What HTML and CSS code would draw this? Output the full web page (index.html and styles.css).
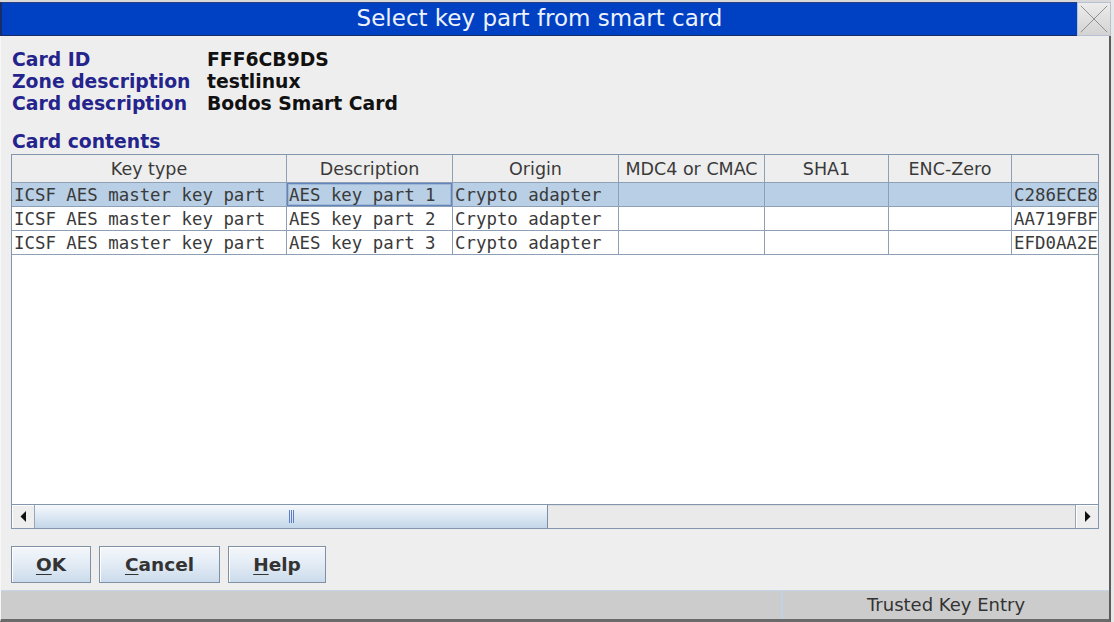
FILE: index.html
```html
<!DOCTYPE html>
<html>
<head>
<meta charset="utf-8">
<title>Select key part from smart card</title>
<link rel="stylesheet" href="styles.css">
</head>
<body>
<div class="desk">
  <div class="dialog">
    <div class="titlebar">
      <div class="title">Select key part from smart card</div>
      <div class="close">
        <svg width="34" height="34" viewBox="0 0 34 34"><path d="M3 3 L31 31 M31 3 L3 31" stroke="#8c8c8c" stroke-width="1" fill="none"/></svg>
      </div>
    </div>
    <div class="main">
      <div class="body">
        <div class="info">
          <div class="lbl">Card ID</div><div class="val">FFF6CB9DS</div>
          <div class="lbl">Zone description</div><div class="val">testlinux</div>
          <div class="lbl">Card description</div><div class="val">Bodos Smart Card</div>
        </div>
        <div class="section">Card contents</div>
        <div class="scrollpane">
          <div class="viewport">
            <div class="hrow">
              <div class="hcell c1">Key type</div>
              <div class="hcell c2">Description</div>
              <div class="hcell c3">Origin</div>
              <div class="hcell c4">MDC4 or CMAC</div>
              <div class="hcell c5">SHA1</div>
              <div class="hcell c6">ENC-Zero</div>
              <div class="hcell c7"></div>
            </div>
            <div class="row sel">
              <div class="cell c1">ICSF AES master key part</div>
              <div class="cell c2 focus">AES key part 1</div>
              <div class="cell c3">Crypto adapter</div>
              <div class="cell c4"></div>
              <div class="cell c5"></div>
              <div class="cell c6"></div>
              <div class="cell c7">C286ECE8</div>
            </div>
            <div class="row">
              <div class="cell c1">ICSF AES master key part</div>
              <div class="cell c2">AES key part 2</div>
              <div class="cell c3">Crypto adapter</div>
              <div class="cell c4"></div>
              <div class="cell c5"></div>
              <div class="cell c6"></div>
              <div class="cell c7">AA719FBF</div>
            </div>
            <div class="row">
              <div class="cell c1">ICSF AES master key part</div>
              <div class="cell c2">AES key part 3</div>
              <div class="cell c3">Crypto adapter</div>
              <div class="cell c4"></div>
              <div class="cell c5"></div>
              <div class="cell c6"></div>
              <div class="cell c7">EFD0AA2E</div>
            </div>
          </div>
          <div class="hscroll">
            <div class="arrow">
              <svg width="23" height="23" viewBox="0 0 23 23"><polygon points="14,6 14,17 8.5,11.5" fill="#111"/></svg>
            </div>
            <div class="thumb"><span class="grip"></span></div>
            <div class="track"></div>
            <div class="arrow right">
              <svg width="23" height="23" viewBox="0 0 23 23"><polygon points="9,6 9,17 14.5,11.5" fill="#111"/></svg>
            </div>
          </div>
        </div>
        <div class="buttons">
          <button class="btn ok"><u>O</u>K</button>
          <button class="btn cancel"><u>C</u>ancel</button>
          <button class="btn help"><u>H</u>elp</button>
        </div>
      </div>
      <div class="status">
        <div class="seg1"></div>
        <div class="seg2">Trusted Key Entry</div>
      </div>
    </div>
  </div>
</div>
</body>
</html>
```
FILE: styles.css
```css
html, body {
  margin: 0;
  padding: 0;
}
body {
  width: 1114px;
  height: 622px;
  overflow: hidden;
  background: #e4e4e4;
  font-family: "DejaVu Sans", sans-serif;
}
.desk {
  display: flex;
  width: 1114px;
  height: 622px;
  background: #e8e8e8;
}
.dialog {
  width: 1111px;
  height: 622px;
  display: flex;
  flex-direction: column;
  box-sizing: border-box;
  border-top: 2px solid #d9d9d9;
}
.titlebar {
  display: flex;
  height: 34px;
  flex: none;
}
.title {
  flex: 1;
  background: #0041c3;
  border-left: 2px solid #1a2c66;
  border-bottom: 1px solid #1a2c66;
  border-top: 1px solid #2a3f80;
  color: #eef2ff;
  font-size: 23px;
  line-height: 31px;
  text-align: center;
  box-sizing: border-box;
}
.close {
  width: 34px;
  height: 34px;
  box-sizing: border-box;
  background: linear-gradient(#ececec, #d3d3d3);
  border: 1px solid #b6c2d4;
  display: flex;
  align-items: center;
  justify-content: center;
}
.close svg {
  display: block;
}
.main {
  flex: 1;
  display: flex;
  flex-direction: column;
  border-right: 2px solid #5c5c5c;
  border-bottom: 3px solid #6a6a6a;
  border-left: 1px solid #f6f6f6;
}
.body {
  flex: 1;
  background: #eeeeee;
  padding: 13px 10px 0 10px;
  display: flex;
  flex-direction: column;
}
.info {
  display: grid;
  grid-template-columns: 195px auto;
  margin-left: 1px;
  font-size: 18.8px;
  font-weight: bold;
  line-height: 22px;
}
.lbl {
  color: #24248c;
}
.val {
  color: #111111;
}
.section {
  margin: 16px 0 1px 1px;
  font-size: 18.8px;
  font-weight: bold;
  line-height: 22px;
  color: #24248c;
}
.scrollpane {
  height: 375px;
  box-sizing: border-box;
  border: 1px solid #8296ad;
  display: flex;
  flex-direction: column;
  background: #ffffff;
}
.viewport {
  flex: 1;
  overflow: hidden;
  background: #ffffff;
}
.hrow, .row {
  display: flex;
  width: 1400px;
}
.hcell {
  flex: none;
  height: 28px;
  box-sizing: border-box;
  padding-top: 2px;
  border-right: 1px solid #8ea0b5;
  border-bottom: 1px solid #8ea0b5;
  background: #eeeeee;
  color: #3a3a3a;
  font-size: 17.5px;
  line-height: 25px;
  text-align: center;
  white-space: nowrap;
  overflow: hidden;
}
.cell {
  flex: none;
  height: 24px;
  box-sizing: border-box;
  border-right: 1px solid #8ea0b5;
  border-bottom: 1px solid #8ea0b5;
  padding-left: 2px;
  padding-top: 1px;
  font-family: "DejaVu Sans Mono", monospace;
  font-size: 17.4px;
  line-height: 22px;
  color: #3a3a3a;
  white-space: nowrap;
  overflow: hidden;
}
.row.sel .cell {
  background: #b8cfe5;
}
.cell.focus {
  box-shadow: inset 0 0 0 1px #6384bd, inset 0 0 0 2px #9fb8d6;
}
.c1 { width: 275px; }
.c2 { width: 166px; }
.c3 { width: 166px; }
.c4 { width: 146px; }
.c5 { width: 124px; }
.c6 { width: 123px; }
.c7 { width: 160px; }
.hscroll {
  height: 24px;
  flex: none;
  box-sizing: border-box;
  border-top: 1px solid #8296ad;
  display: flex;
  background: #eeeeee;
}
.arrow {
  width: 23px;
  flex: none;
  box-sizing: border-box;
  background: #eeeeee;
  border-right: 1px solid #9aa6b4;
  box-shadow: inset 1px 1px 0 #ffffff;
}
.arrow.right {
  border-right: none;
  border-left: 1px solid #9aa6b4;
}
.arrow svg {
  display: block;
}
.thumb {
  width: 513px;
  flex: none;
  box-sizing: border-box;
  background: linear-gradient(#f6f9fc, #dfe9f4 45%, #c3d6e9);
  border-right: 1px solid #7c8ea3;
  display: flex;
  align-items: center;
  justify-content: center;
}
.grip {
  width: 5px;
  height: 13px;
  background: repeating-linear-gradient(90deg, #5f7fc4 0 1px, transparent 1px 2px);
}
.track {
  flex: 1;
  background: #eaeaea;
  box-shadow: inset 0 1px 0 #dcdcdc;
}
.buttons {
  display: flex;
  gap: 8px;
  margin-top: 17px;
}
.btn {
  height: 37px;
  box-sizing: border-box;
  border: 1px solid #7f90a4;
  background: linear-gradient(#f4f7fb, #e2ebf5 50%, #cbdbeb);
  font-family: "DejaVu Sans", sans-serif;
  font-size: 18.5px;
  font-weight: bold;
  color: #333333;
  padding: 0;
  margin: 0;
  box-shadow: inset 1px 1px 0 #ffffff;
}
.btn u {
  text-underline-offset: 3px;
}
.ok { width: 80px; }
.cancel { width: 121px; }
.help { width: 98px; }
.status {
  height: 29px;
  flex: none;
  display: flex;
  background: #cccccc;
  border-top: 1px solid #c5d6e8;
  box-sizing: border-box;
}
.seg1 {
  width: 780px;
  border-right: 2px solid #c0d3e6;
}
.seg2 {
  flex: 1;
  text-align: center;
  font-size: 18px;
  line-height: 28px;
  color: #333333;
}
```
